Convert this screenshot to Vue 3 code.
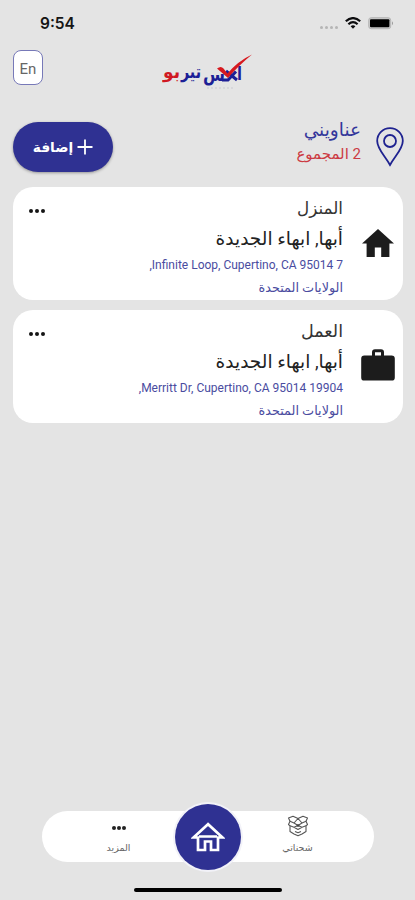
<template>
  <div class="screen" dir="rtl">
    <div class="status-bar" dir="ltr">
      <span class="time">9:54</span>
      <div class="status-icons">
        <div class="signal"><i v-for="n in 4" :key="n"></i></div>
        <svg class="wifi" viewBox="0 0 16 12">
          <g fill="none" stroke="#0c0c0e" stroke-width="2.2">
            <path d="M.8 4.3Q8-2.1 15.2 4.3" />
            <path d="M3.4 7.2Q8 3.1 12.6 7.2" />
          </g>
          <path d="M5.6 9.2Q8 7.2 10.4 9.2L8 11.8Z" fill="#0c0c0e" />
        </svg>
        <svg class="battery" viewBox="0 0 26 13">
          <rect x=".7" y=".7" width="22" height="11" rx="2.5" fill="#c9c9c9" stroke="#b5b5b5" />
          <rect x="2" y="2.2" width="19.4" height="8" rx="1" fill="#000" />
          <path d="M24 4.2q2 2 0 4z" fill="#999" />
        </svg>
      </div>
    </div>

    <header class="top-bar" dir="ltr">
      <button class="lang">En</button>
      <svg class="logo" viewBox="0 0 94 40" direction="rtl">
        <g class="logo-text" fill="#1d1f96">
          <text x="80" y="27" font-size="18" textLength="5" lengthAdjust="spacingAndGlyphs">ا</text>
          <text x="63" y="28" font-size="19" textLength="22" lengthAdjust="spacingAndGlyphs">س</text>
          <text x="39" y="25" font-size="18" textLength="20" lengthAdjust="spacingAndGlyphs">تير</text>
          <text x="18" y="25" font-size="18" textLength="17" lengthAdjust="spacingAndGlyphs" fill="#d01822">بو</text>
        </g>
        <path d="M60 27h6l8-8.500M64 18l11 9" fill="none" stroke="#1d1f96" stroke-width="3" />
        <path d="M55 15.500q4-3 6.500 0l4 5Q76 8 90 1.500 76 13 66 25z" fill="#d7191f" />
        <path d="M45 35h28" stroke="#cacad0" stroke-width="1" stroke-dasharray="2 2" />
      </svg>
    </header>

    <section class="heading">
      <svg class="pin" viewBox="0 0 28 40">
        <g fill="none" stroke="#1f2390" stroke-width="1.8">
          <path d="M14 38C9 29 1.200 22 1.200 14a12.800 12.800 0 0 1 25.600 0C26.800 22 19 29 14 38Z" />
          <circle cx="14" cy="14" r="6" />
        </g>
      </svg>
      <div class="heading-text">
        <h1>عناويني</h1>
        <p>2 المجموع</p>
      </div>
      <button class="add">
        <svg viewBox="0 0 16 16"><path d="M8 .500v15M.500 8h15" stroke="#fff" stroke-width="1.800" /></svg>
        <span>إضافة</span>
      </button>
    </section>

    <main class="cards">
      <article v-for="item in addresses" :key="item.title" class="card">
        <div class="card-icon">
          <svg v-if="item.icon === 'home'" class="home" viewBox="0 0 32 28">
            <path d="M16 0 0 14.400h4.600V28h8.200v-9.400h6.400V28h8.200V14.400H32z" fill="#1c1c1c" />
          </svg>
          <svg v-else class="work" viewBox="0 0 34 32">
            <path d="M3.400 6.400H11V3.200Q11 .200 14 .200h6q3 0 3 3v3.200h7.600q3.200 0 3.200 3.200v18.800q0 3.200-3.200 3.200H3.400q-3.200 0-3.200-3.200V9.600q0-3.200 3.200-3.200ZM14 6.400h6V3.200h-6Z" fill="#1c1c1c" fill-rule="evenodd" />
          </svg>
        </div>
        <div class="card-body">
          <h2 :class="{ narrow: item.icon === 'work' }">{{ item.title }}</h2>
          <h3>أبها, ابهاء الجديدة</h3>
          <p class="street">{{ item.street }}</p>
          <p class="country">الولايات المتحدة</p>
        </div>
        <button class="more"><i></i><i></i><i></i></button>
      </article>
    </main>

    <nav class="tab-bar">
      <a class="tab shipments">
        <svg viewBox="0 0 22 22">
          <g fill="none" stroke="#555" stroke-width="1.100" stroke-linejoin="round">
            <path d="M1.500 3 6 1.200 11 3.500l5-2.300L20.500 3 19 6.200l1.500 3.300-1.500 1.300v5.700L15 19l-4 1.800L7 19l-4-2.500v-5.700L1.500 9.500 3 6.200z" />
            <path d="M3 6.200 7 8l4-4.500L15 8l4-1.800M7 8l4 2.500L15 8M3 10.800l4 1.500 4-1.800 4 1.800 4-1.500M7 12.300l4 2.200 4-2.200M8 16.500l3 1.300 3-1.300" />
          </g>
          <circle cx="11" cy="10.500" r="1.300" fill="#444" />
        </svg>
        <span>شحناتي</span>
      </a>
      <a class="tab-home">
        <svg viewBox="0 0 34 30">
          <path d="M17 2.200 2.500 15.500H7V28h7v-8.500h6V28h7V15.500h4.500zM8 14.500h18" fill="none" stroke="#fff" stroke-width="2.700" />
        </svg>
      </a>
      <a class="tab more-tab">
        <div class="dots"><i></i><i></i><i></i></div>
        <span>المزيد</span>
      </a>
    </nav>
    <div class="home-indicator"></div>
  </div>
</template>

<script setup>
const addresses = [
  { icon: 'home', title: 'المنزل', street: '7 Infinite Loop, Cupertino, CA 95014,' },
  { icon: 'work', title: 'العمل', street: '19904 Merritt Dr, Cupertino, CA 95014,' }
]
</script>

<style>
body {
  margin: 0;
  background: #e4e4e4;
}
</style>

<style scoped>
.screen {
  box-sizing: border-box;
  width: 415px;
  height: 900px;
  display: flex;
  flex-direction: column;
  overflow: hidden;
  background: #e4e4e4;
  color: #222;
  font-family: Roboto, 'DejaVu Sans', sans-serif;
}

h1, h2, h3, p {
  margin: 0;
  font-weight: 400;
  white-space: nowrap;
}

button {
  border: 0;
  padding: 0;
  font-family: inherit;
}

svg {
  display: block;
  flex-shrink: 0;
}

.status-bar {
  height: 46px;
  display: flex;
  align-items: center;
  justify-content: space-between;
  padding: 0 21px 0 40px;
  box-sizing: border-box;
}

.time {
  font: 600 15.5px/20px Inter, sans-serif;
  color: #151515;
  padding-top: 1px;
}

.status-icons {
  display: flex;
  align-items: center;
}

.signal {
  display: flex;
  gap: 2px;
  margin: 8px 7px 0 0;
}

.signal i {
  width: 3px;
  height: 3px;
  border-radius: 50%;
  background: #b5b5b5;
}

.wifi {
  width: 16px;
  height: 12px;
  margin-right: 7px;
}

.battery {
  width: 26px;
  height: 13px;
}

.top-bar {
  height: 66px;
  display: flex;
  padding: 4px 13px 0;
  box-sizing: border-box;
}

.lang {
  box-sizing: border-box;
  width: 30px;
  height: 35px;
  border: 1px solid #7779b8;
  border-radius: 8px;
  background: #fff;
  color: #666;
  font-size: 15px;
  padding-top: 3px;
}

.logo {
  width: 94px;
  height: 40px;
  margin: 3px 0 0 119px;
}

.logo-text {
  font-family: 'DejaVu Sans', sans-serif;
  font-weight: 700;
}

.heading {
  height: 75px;
  display: flex;
  align-items: flex-start;
  padding: 10px 11px 0 13px;
  box-sizing: border-box;
}

.pin {
  width: 28px;
  height: 40px;
  margin-top: 5px;
}

.heading-text {
  flex: 1;
  margin-right: 15px;
}

h1 {
  font-size: 18.5px;
  line-height: 24px;
  color: #34379b;
  margin-top: -4px;
}

.heading-text p {
  font-size: 15px;
  line-height: 24px;
  color: #cc3b43;
}

.add {
  width: 100px;
  height: 50px;
  display: flex;
  align-items: center;
  justify-content: center;
  gap: 4px;
  border-radius: 25px;
  background: #2f3192;
  color: #fff;
  font-size: 13.7px;
  font-weight: 700;
  box-shadow: 0 1px 3px rgba(0, 0, 0, 0.35);
}

.add svg {
  width: 16px;
  height: 16px;
}

.cards {
  display: flex;
  flex-direction: column;
  gap: 10px;
  padding: 0 12px 0 13px;
}

.card {
  box-sizing: border-box;
  height: 113px;
  display: flex;
  padding: 8px 8px 0 16px;
  border-radius: 20px;
  background: #fff;
}

.card-icon {
  width: 34px;
  display: flex;
  justify-content: center;
  padding-top: 34px;
}

.home {
  width: 32px;
  height: 28px;
}

.work {
  width: 34px;
  height: 32px;
  margin-top: -3px;
}

.card-body {
  flex: 1;
  margin-right: 18px;
}

h2 {
  font-size: 16.8px;
  line-height: 26px;
  color: #333;
}

h2.narrow {
  font-size: 17.5px;
}

h3 {
  font-size: 18.5px;
  line-height: 30px;
  margin-top: 3px;
  color: #222;
}

.street {
  font-size: 12px;
  line-height: 22px;
  color: #4a4c9f;
}

.country {
  font-size: 12.8px;
  line-height: 24px;
  color: #4a4c9f;
}

.more {
  display: flex;
  gap: 2px;
  align-self: flex-start;
  margin-top: 14px;
  background: none;
}

.more i {
  width: 4px;
  height: 4px;
  border-radius: 50%;
  background: #151515;
}

.tab-bar {
  width: 332px;
  height: 51px;
  margin: auto auto 26px;
  display: flex;
  align-items: center;
  justify-content: space-between;
  padding: 0 59px 0 60px;
  box-sizing: border-box;
  border-radius: 26px;
  background: #fff;
}

.tab {
  width: 34px;
  height: 51px;
  display: flex;
  flex-direction: column;
  align-items: center;
  color: #666;
  font-size: 9.5px;
  line-height: 14px;
  white-space: nowrap;
}

.shipments svg {
  width: 22px;
  height: 22px;
  margin: 4px 0;
}

.dots {
  display: flex;
  gap: 1px;
  padding: 15px 0 11px;
}

.dots i {
  width: 4px;
  height: 4px;
  border-radius: 50%;
  background: #222;
}

.tab-home {
  flex-shrink: 0;
  width: 66px;
  height: 66px;
  display: flex;
  align-items: center;
  justify-content: center;
  border-radius: 50%;
  background: #2f3192;
  box-shadow: 0 0 0 2px #f2f2f8;
}

.tab-home svg {
  width: 34px;
  height: 30px;
}

.home-indicator {
  flex-shrink: 0;
  width: 148px;
  height: 4px;
  margin: 0 auto 8px;
  border-radius: 2px;
  background: #000;
}
</style>
